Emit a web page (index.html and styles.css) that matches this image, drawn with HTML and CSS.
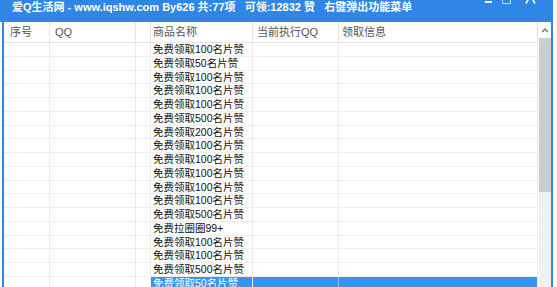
FILE: index.html
```html
<!DOCTYPE html>
<html lang="zh-CN">
<head>
    <meta charset="UTF-8">
    <title>爱Q生活网</title>
    <link rel="stylesheet" href="styles.css">
</head>
<body>

<div class="window">
    <div class="titlebar">
        <span class="title">爱Q生活网 - www.iqshw.com By626 共:77项   可领:12832 赞   右键弹出功能菜单</span>
        <svg class="controls" width="60" height="5" viewBox="0 0 60 5">
            <!-- only the lower edge of the caption buttons is visible -->
            <rect x="5" y="1" width="7" height="2" fill="#fff"/>
            <path d="M22.5 0V3.5H30.5V0" stroke="#fff" stroke-width="1" fill="none" opacity="0.7"/>
            <path d="M49 -2L46 3.5M52 -2L55 3.5" stroke="#fff" stroke-width="1.6" fill="none"/>
        </svg>
    </div>

    <div class="frame">
        <div class="list" id="list">
            <div class="row head">
                <div class="cell c1">序号</div>
                <div class="cell c2">QQ</div>
                <div class="cell c3"></div>
                <div class="cell c4">商品名称</div>
                <div class="cell c5">当前执行QQ</div>
                <div class="cell c6">领取信息</div>
            </div>
            <!-- rows filled below -->
        </div>
        <div class="scrollbar">
            <div class="arrow">
                <svg width="12" height="16" viewBox="0 0 12 16">
                    <path d="M3 10L6 7L9 10" stroke="#606060" stroke-width="1.2" fill="none"/>
                </svg>
            </div>
            <div class="thumb"></div>
        </div>
    </div>
</div>

<script>
    const items = [
        '免费领取100名片赞', '免费领取50名片赞', '免费领取100名片赞', '免费领取100名片赞',
        '免费领取100名片赞', '免费领取500名片赞', '免费领取200名片赞', '免费领取100名片赞',
        '免费领取100名片赞', '免费领取100名片赞', '免费领取100名片赞', '免费领取100名片赞',
        '免费领取500名片赞', '免费拉圈圈99+', '免费领取100名片赞', '免费领取100名片赞',
        '免费领取500名片赞', '免费领取50名片赞'
    ];
    const list = document.getElementById('list');

    items.forEach((name, i) => {
        const row = document.createElement('div');
        row.className = 'row';
        if (i === items.length - 1) row.classList.add('selected'); // last one is highlighted
        row.innerHTML = `<div class="cell c1"></div><div class="cell c2"></div><div class="cell c3"></div>` +
            `<div class="cell c4">${name}</div><div class="cell c5"></div><div class="cell c6"></div>`;
        list.appendChild(row);
    });
</script>

</body>
</html>
```

FILE: styles.css
```css
body {
    margin: 0;
    background-color: #fff;
    font-family: "Liberation Sans", "Noto Sans CJK SC", sans-serif;
    overflow: hidden;
}

.window {
    width: 553px;
    height: 287px;
    display: flex;
    flex-direction: column;
    overflow: hidden;
}

.titlebar {
    height: 22px;
    flex: none;
    display: flex;
    align-items: flex-start;
    background-color: #2f86e4;
    color: #fff;
}

.title {
    white-space: pre;
    font-size: 11px;
    font-weight: bold;
    line-height: 12px;
    padding: 1px 0 0 12px;
}

.controls {
    margin-left: auto;
    margin-right: 13px;
}

.frame {
    flex: 1;
    display: flex;
    margin-left: 2px;
    border-left: 2px solid #2f86e4;
    border-right: 2px solid #2f86e4;
    min-height: 0;
}

.list {
    width: 534px;
    flex: none;
    overflow: hidden;
}

.row {
    display: grid;
    grid-template-columns: 46px 86px 15px 102px 86px 199px;
    height: 13.75px;
    box-sizing: border-box;
}

.cell {
    border-right: 1px solid #ececec;
    border-bottom: 1px solid #efefef;
    font-size: 10.5px;
    line-height: 13px;
    color: #111;
    padding-left: 2px;
    white-space: nowrap;
    overflow: hidden;
}

.head {
    height: 21px;
}

.head .cell {
    border-right-color: #e3e3e3;
    border-bottom-color: #e3e3e3;
    color: #555;
    font-size: 11px;
    line-height: 20px;
}

.c1 { padding-left: 6px; }
.c2 { padding-left: 5px; }
.head .c5 { padding-left: 4px; }
.head .c6 { padding-left: 3px; }

.selected .c4,
.selected .c5,
.selected .c6 {
    background-color: #3396f6;
    color: #fff;
    border-bottom-color: #3396f6;
}

.selected .c5 {
    border-right-color: #8cc4fb;
}

.scrollbar {
    width: 12px;
    margin-left: 1px;
    flex: none;
    background-color: #f0f0f0;
    display: flex;
    flex-direction: column;
}

.arrow {
    height: 16px;
    background-color: #fff;
}

.thumb {
    height: 154px;
    background-color: #cdcdcd;
}
```
